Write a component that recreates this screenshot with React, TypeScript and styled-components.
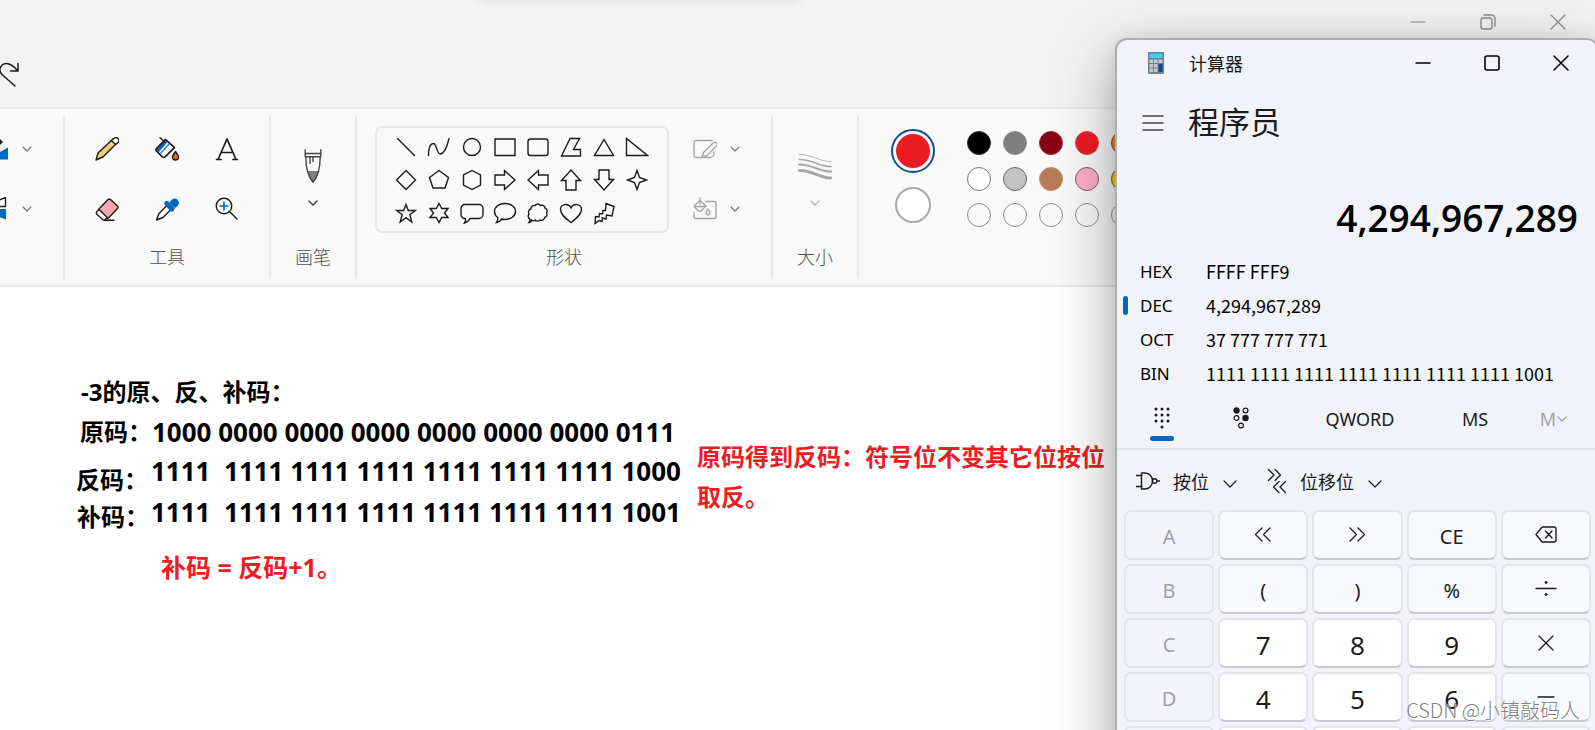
import React from "react";
import styled, { createGlobalStyle } from "styled-components";

const GlobalStyle = createGlobalStyle`
  *, *::before, *::after { box-sizing: border-box; }
  body { margin: 0; font-family: "Noto Sans CJK SC", "Noto Sans", sans-serif; color: #1b1b1b; }
  button { font: inherit; color: inherit; background: none; border: 0; padding: 0; margin: 0; }
  svg { display: block; flex: none; }
  h1, h2, p { margin: 0; font-weight: 400; }
`;

const Desktop = styled.div`
  position: relative;
  height: 100vh;
  overflow: hidden;
`;

/* ---------- Paint window ---------- */

const PaintWindow = styled.main`
  display: flex;
  flex-direction: column;
  height: 100%;
  background: #fff;
`;

const PaintHeader = styled.header`
  flex: none;
  height: 107px;
  background: #f3f3f3;
`;

/* Shade cast by the snap bar that is docked above the screen edge. */
const TopShade = styled.div`
  position: absolute;
  top: -10px;
  left: 30%;
  width: 320px;
  height: 8px;
  box-shadow: 0 2px 12px rgba(0, 0, 0, 0.12);
`;

const PaintCaption = styled.div`
  display: flex;
  justify-content: flex-end;
  height: 43px;
  padding-right: 2px;
  color: #8c8c8c;
`;

const PaintCaptionButton = styled.button`
  display: grid;
  place-items: center;
  width: 70px;
`;

const QuickBar = styled.div`
  padding-top: 19px;
`;

const Ribbon = styled.div`
  display: flex;
  flex: none;
  padding: 6px 0;
  background: #f9f9f9;
  border: solid #e9e9e9;
  border-width: 2px 0;
`;

const Group = styled.section<{ $width?: number }>`
  flex: none;
  width: ${(p) => (p.$width ? `${p.$width}px` : "auto")};
  height: 164px;
  border-right: ${(p) => (p.$width ? "2px solid #e9e9e9" : "0")};
`;

const GroupBody = styled.div<{ $gap?: number; $start?: number }>`
  display: flex;
  align-items: center;
  justify-content: ${(p) => (p.$start === undefined ? "center" : "flex-start")};
  gap: ${(p) => p.$gap ?? 0}px;
  height: 124px;
  padding: 4px 0 0 ${(p) => p.$start ?? 0}px;
`;

const GroupLabel = styled.h2`
  font-size: 18px;
  font-weight: 300;
  line-height: 34px;
  text-align: center;
  color: #505050;
`;

const IconGrid = styled.div<{ $cols: number; $cell: number }>`
  display: grid;
  grid-template-columns: repeat(${(p) => p.$cols}, ${(p) => p.$cell}px);
  grid-auto-rows: ${(p) => p.$cell}px;
`;

const IconButton = styled.button`
  display: grid;
  place-items: center;
`;

const StackButton = styled.button`
  display: flex;
  flex-direction: column;
  align-items: center;
  gap: 13px;
`;

const SplitColumn = styled.div`
  display: grid;
  grid-auto-rows: 60px;
`;

const SplitButton = styled.button`
  display: flex;
  align-items: center;
  gap: 12px;
`;

const ShapeGallery = styled.div`
  width: 294px;
  padding: 3px 12px 1px;
  border: 2px solid #e9e9e9;
  border-radius: 7px;
`;

const ActiveColors = styled.div`
  display: flex;
  flex-direction: column;
  align-items: center;
  gap: 14px;
  padding-bottom: 6px;
`;

const PrimaryColor = styled.button`
  width: 44px;
  height: 44px;
  padding: 3px;
  border: 2px solid #0f4c9c;
  border-radius: 50%;
  background-color: #ed1c24;
  background-clip: content-box;
`;

const SecondaryColor = styled.button`
  width: 36px;
  height: 36px;
  border: 2px solid #a9a9a9;
  border-radius: 50%;
  background: #fff;
`;

const Palette = styled.div`
  display: grid;
  grid-template-columns: repeat(5, 24px);
  gap: 12px;
`;

const Swatch = styled.button<{ $fill: string; $line: string }>`
  width: 24px;
  height: 24px;
  border-radius: 50%;
  border: 1px solid ${(p) => p.$line};
  background: ${(p) => p.$fill};
`;

const Canvas = styled.div`
  position: relative;
  flex: 1;
  background: #fff;
`;

const CanvasText = styled.p<{ $x: number; $y: number; $size?: number; $red?: boolean }>`
  position: absolute;
  left: ${(p) => p.$x}px;
  top: ${(p) => p.$y}px;
  font-family: "Noto Sans", "Noto Sans CJK SC", sans-serif;
  font-size: ${(p) => p.$size ?? 24}px;
  font-weight: 700;
  line-height: 40px;
  white-space: pre;
  color: ${(p) => (p.$red ? "#ed1c24" : "#000")};
`;

/* ---------- Calculator window ---------- */

const CalcWindow = styled.aside`
  position: absolute;
  top: 38px;
  right: -4px;
  width: 484px;
  border: 2px solid #adadad;
  border-radius: 12px;
  background: #f1f3f9;
  box-shadow: 0 20px 64px rgba(0, 0, 0, 0.34), 0 4px 20px rgba(0, 0, 0, 0.1);
`;

const CalcCaption = styled.header`
  display: flex;
  align-items: center;
  height: 46px;
  padding: 0 2px 0 31px;
`;

const CalcTitle = styled.h1`
  flex: 1;
  padding-left: 25px;
  font-size: 18px;
  line-height: 24px;
`;

const CalcCaptionButton = styled.button`
  display: grid;
  place-items: center;
  width: 69px;
  height: 44px;
  color: #000;
`;

const ModeRow = styled.div`
  display: flex;
  align-items: center;
  gap: 24px;
  height: 74px;
  padding-left: 25px;
`;

const ModeName = styled.h2`
  padding-bottom: 4px;
  font-size: 31px;
  line-height: 40px;
`;

const Result = styled.output`
  display: block;
  padding: 28px 19px 0 0;
  font-family: "Open Sans", "Noto Sans", sans-serif;
  font-size: 37px;
  font-weight: 600;
  line-height: 60px;
  text-align: right;
  color: #000;
`;

const BaseList = styled.div`
  display: grid;
  grid-auto-rows: 34px;
  padding: 6px 0 0 6px;
`;

const BaseRow = styled.button<{ $active?: boolean }>`
  display: grid;
  grid-template-columns: 5px 66px 1fr;
  align-items: center;
  font-size: 18px;
  text-align: left;
  color: #000;

  &::before {
    content: "";
    height: 19px;
    border-radius: 3px;
    background: ${(p) => (p.$active ? "#0067c0" : "transparent")};
  }
`;

const BaseName = styled.span`
  padding-left: 12px;
  font-family: "Noto Sans", sans-serif;
  font-size: 17px;
`;

const BaseValue = styled.span`
  padding-left: 12px;
`;

const TabRow = styled.div`
  display: grid;
  grid-template-columns: 90px 68px 170px 60px 98px;
  height: 60px;
  padding-top: 7px;
  border-bottom: 2px solid #e3e4ea;
`;

const Tab = styled.button<{ $active?: boolean; $muted?: boolean }>`
  display: flex;
  align-items: center;
  justify-content: center;
  position: relative;
  height: 44px;
  font-family: "Noto Sans", sans-serif;
  font-size: 18px;
  color: ${(p) => (p.$muted ? "#a0a1a5" : "#1b1b1b")};

  &::after {
    content: "";
    position: absolute;
    bottom: 0;
    width: 24px;
    height: 5px;
    border-radius: 3px;
    background: ${(p) => (p.$active ? "#0067c0" : "transparent")};
  }
`;

const OperatorRow = styled.div`
  display: flex;
  align-items: center;
  gap: 29px;
  height: 60px;
  padding: 2px 0 0 19px;
`;

const OperatorMenu = styled.button`
  display: flex;
  align-items: center;
  gap: 13px;
  font-size: 18px;
`;

const Keypad = styled.div`
  display: grid;
  grid-template-columns: repeat(5, 1fr);
  grid-auto-rows: 50px;
  gap: 4px;
  padding: 0 6px 6px 7px;
`;

type KeyKind = "digit" | "operator" | "disabled";

const keyColors: Record<KeyKind, string> = {
  digit: "#ffffff",
  operator: "#f8f9fd",
  disabled: "#f3f4f9",
};

const Key = styled.button<{ $kind: KeyKind; $text: boolean }>`
  display: grid;
  place-items: center;
  padding-top: ${(p) => (p.$text ? 4 : 0)}px;
  border: 2px solid #e3e4e9;
  border-bottom-color: ${(p) => (p.$kind === "disabled" ? "#e3e4e9" : "#c9cace")};
  border-radius: 7px;
  background: ${(p) => keyColors[p.$kind]};
  background-clip: padding-box;
  font-family: "Noto Sans", sans-serif;
  font-size: ${(p) => (p.$kind === "digit" ? 26 : 20)}px;
  line-height: 32px;
  color: ${(p) => (p.$kind === "disabled" ? "#a0a1a5" : "#1b1b1b")};
`;

const Watermark = styled.span`
  position: absolute;
  right: 15px;
  bottom: 5px;
  font-size: 20px;
  font-weight: 300;
  line-height: 30px;
  color: rgba(110, 110, 110, 0.9);
  text-shadow: 1px 1px 0 rgba(255, 255, 255, 0.8);
  white-space: nowrap;
`;

/* ---------- Drawings ---------- */

type IconProps = { w?: number; h?: number; sw?: number; color?: string; children: React.ReactNode };

const Icon = ({ w = 24, h = 24, sw = 1.4, color = "currentColor", children }: IconProps) => (
  <svg width={w} height={h} viewBox={`0 0 ${w} ${h}`} fill="none" stroke={color} strokeWidth={sw} strokeLinejoin="round" strokeLinecap="round" aria-hidden="true">
    {children}
  </svg>
);

const Chevron = ({ color = "#777" }: { color?: string }) => (
  <Icon w={12} h={14} sw={1.2} color={color}>
    <path d="M2 5l4 4 4-4" />
  </Icon>
);

const WideChevron = () => (
  <Icon w={16} h={16} sw={1.2}>
    <path d="M2 8l6 6 6-6" />
  </Icon>
);

const tools: [string, React.ReactNode][] = [
  ["铅笔", <g key="p"><path d="M18 2a3 3 0 014 4L8 20l-7 3 2-7z" fill="#efcb7d" /><path d="M16.5 3.5l3-2.5a3 3 0 014 4l-3 2.500z" fill="#fff" /></g>],
  ["填充", <g key="f"><path d="M10.500 2.500l9 8-9.500 9.500a2 2 0 01-2.500 0l-6-6a2 2 0 010-2.500z" fill="#fff" /><path d="M10 3l2.500 2-8.500 10-2.500-2v-2z" fill="#0067c0" stroke="none" /><path d="M14.500 6.500l-9 10" stroke="#2a7fd4" strokeWidth="1.5" strokeLinecap="butt" /><path d="M5 .7l4.500 4" /><path d="M10.500 2.500l9 8-9.500 9.500a2 2 0 01-2.500 0l-6-6a2 2 0 010-2.500z" /><path d="M20.500 14.500c2 2.700 3 4 3 5.500a3 3 0 01-6 0c0-1.500 1-2.800 3-5.500z" fill="#f7630c" /></g>],
  ["文本", <g key="t"><path d="M3 22.500L12 2l9 20.500M6 15.500h12M.8 22.500h6M17.200 22.500h6" strokeWidth="1.7" strokeLinecap="butt" /></g>],
  ["橡皮擦", <g key="e"><path d="M13 2.500a1.800 1.800 0 012.500 0l7 6.500a1.800 1.800 0 010 2.500L12.500 22 3.500 12.500z" fill="#f7a9ad" /><path d="M4 12.500l-2 2a2 2 0 000 2.800l5.500 5.200a2 2 0 002.600 0l2.200-2z" fill="#fff" /><path d="M9 23.300h10" /></g>],
  ["颜色选取器", <g key="c"><path d="M12.500 8L4 16.500 1.500 23l6.500-2.500L16.500 12z" fill="#fff" /><path d="M10 4.500a2.500 2.500 0 013.500 0l6.500 6.500-1.500 3a2 2 0 01-3 0l-5.500-6a2.500 2.500 0 010-3.500z" fill="#0067c0" stroke="none" /><path d="M16 3.500a4.300 4.300 0 116.500 5.500l-2.500 2-5.500-5.500z" fill="#0067c0" stroke="none" /></g>],
  ["放大镜", <g key="m"><circle cx="9" cy="9" r="7.800" /><path d="M15 15l7 7" /><path d="M5 9h8M9 5v8" stroke="#0067c0" strokeWidth="1.600" /></g>],
];

const shapes: [string, string][] = [
  ["直线", "M3.500 3.500l17 17"],
  ["曲线", "M1.500 20.500c0-7 1.500-12 5-12s3 11 7 10.500c4-.5 6.500-7 8.500-15.500"],
  ["椭圆形", "M12 3.500a8.500 8.500 0 100 17 8.500 8.500 0 000-17z"],
  ["矩形", "M2 4h20v16.500H2z"],
  ["圆角矩形", "M4.500 4h15a2.500 2.500 0 012.500 2.500v11.500a2.500 2.500 0 01-2.500 2.500h-15a2.500 2.500 0 01-2.500-2.500V6.500A2.500 2.500 0 014.500 4z"],
  ["多边形", "M11 3.500h9.500l-6 11h7v6.500H2.500z"],
  ["三角形", "M12 4.500l9.500 16h-19z"],
  ["直角三角形", "M1.500 3.500v17h21z"],
  ["菱形", "M12 2.500l9.500 9.500-9.500 9.500L2.500 12z"],
  ["五边形", "M12 2.500l9.500 7-3.500 10.500H6L2.500 9.500z"],
  ["六边形", "M12 2.500l8.500 4.500v10L12 21.500 3.500 17V7z"],
  ["右箭头", "M2 7h9.500V2.500L22 12 11.500 21.500V17H2z"],
  ["左箭头", "M22 7h-9.500V2.500L2 12l10.500 9.500V17H22z"],
  ["上箭头", "M7 22V12.500H2.500L12 2l9.500 10.500H17V22z"],
  ["下箭头", "M7 2v9.500H2.500L12 22l9.500-10.500H17V2z"],
  ["四角星形", "M12 2.500l2.500 7 7 2.500-7 2.500-2.500 7-2.500-7-7-2.500 7-2.500z"],
  ["五角星形", "M12 3.500l2.300 6h7l-5.500 4.200 2 7.300-5.800-4.300L6.200 21l2-7.300L2.700 9.500h7z"],
  ["六角星形", "M12 2.500l2.700 5h6.300l-3.500 4.500 3.500 4.500h-6.300l-2.700 5-2.700-5H3l3.500-4.500L3 7.500h6.300z"],
  ["圆角矩形标注", "M5 3.500h14a4 4 0 014 4v6a4 4 0 01-4 4h-9c-1 2-3 4-5.500 4.500 1-1.500 1.500-3 1-4.500a4 4 0 01-4.500-4v-6a4 4 0 014-4z"],
  ["椭圆形标注", "M12 2.500c6 0 10.500 3.500 10.500 8s-5 8-10.500 8c-1.500 0-2.500-.2-3.500-.5-.8 2-2.500 3-5 3.500 1.200-1.500 1.500-3 1.200-5C2.500 15 1.500 13 1.500 10.500c0-4.500 4.500-8 10.500-8z"],
  ["云形标注", "M9 4.500c1.500-2 4-2 5.500 0 2-1 4.500.5 4.500 2.500 2 .7 3 3 1.500 5 1.200 2 .2 4-1.800 4.500-.2 2-2.700 3.500-4.700 2.500-1.500 1.500-4 1.500-5 0-1 .8-2.500.8-3.500 0 0 1.500-1 2.300-2.500 2.500.8-1 1-2 .8-3.500-2-1-2-3.500-.8-5-1.200-2-.2-4.500 1.800-5 .2-2.500 2.200-4 4.200-3.500z"],
  ["心形", "M12 21.500C7 17.500 1.500 13.500 1.500 8.500 1.500 3 9.500 1.500 12 7c2.500-5.500 10.500-4 10.500 1.500 0 5-5.500 9-10.500 13z"],
  ["闪电", "M14 2.500l8 3-2 9.500-5.500-1-.5 4-3.500-1-.5 3.500-3-1L3 22.500l.5-7 3.500.5.500-3.500 3 .5.500-3.500 2.500 0z"],
];

const palette: [string, string, string][] = [
  ["黑色", "#000000", "#333"],
  ["灰色", "#7f7f7f", "#8f8f8f"],
  ["深红色", "#880015", "#97303f"],
  ["红色", "#ed1c24", "#e5444a"],
  ["橙色", "#ff7f27", "#555"],
  ["白色", "#ffffff", "#777"],
  ["浅灰色", "#c3c3c3", "#666"],
  ["褐色", "#b97a57", "#c58c6c"],
  ["玫瑰色", "#ffaec9", "#666"],
  ["金色", "#ffc90e", "#555"],
  ["自定义 1", "transparent", "#8c8c8c"],
  ["自定义 2", "transparent", "#8c8c8c"],
  ["自定义 3", "transparent", "#8c8c8c"],
  ["自定义 4", "transparent", "#8c8c8c"],
  ["自定义 5", "transparent", "#8c8c8c"],
];

const bases: [string, string][] = [
  ["HEX", "FFFF FFF9"],
  ["DEC", "4,294,967,289"],
  ["OCT", "37 777 777 771"],
  ["BIN", "1111 1111 1111 1111 1111 1111 1111 1001"],
];

const keys: [KeyKind, React.ReactNode, string?][] = [
  ["disabled", "A"],
  ["operator", <Icon key="i" sw={1.3}><path d="M11 5l-6.500 6.500 6.500 6.500M19 5l-6.500 6.500 6.500 6.500" /></Icon>, "左移"],
  ["operator", <Icon key="i" sw={1.3}><path d="M5 5l6.500 6.500L5 18M13 5l6.500 6.500-6.500 6.500" /></Icon>, "右移"],
  ["operator", "CE"],
  ["operator", <Icon key="i" sw={1.4}><path d="M9 4h11a2 2 0 012 2v11a2 2 0 01-2 2H9a2 2 0 01-1.500-.7L2 11.500l5.500-6.800A2 2 0 019 4zM11.500 8l6.500 7M18 8l-6.500 7" /></Icon>, "退格"],
  ["disabled", "B"],
  ["operator", "("],
  ["operator", ")"],
  ["operator", "%"],
  ["operator", <Icon key="i" sw={1.3}><path d="M2 11.500h20" /><circle cx="12" cy="5.500" r="1" fill="#1b1b1b" strokeWidth="1" /><circle cx="12" cy="17.500" r="1" fill="#1b1b1b" strokeWidth="1" /></Icon>, "除以"],
  ["disabled", "C"],
  ["digit", "7"],
  ["digit", "8"],
  ["digit", "9"],
  ["operator", <Icon key="i" sw={1.3}><path d="M5 5l14 14M19 5L5 19" /></Icon>, "乘以"],
  ["disabled", "D"],
  ["digit", "4"],
  ["digit", "5"],
  ["digit", "6"],
  ["operator", <Icon key="i" sw={1.4}><path d="M4 12h16" /></Icon>, "减去"],
  ["disabled", null, "E"],
  ["digit", null, "1"],
  ["digit", null, "2"],
  ["digit", null, "3"],
  ["operator", null, "加"],
];

const CalcLogo = () => (
  <svg width="16" height="22" viewBox="0 0 16 22" aria-hidden="true">
    <rect width="16" height="22" rx="1" fill="#71808e" />
    <rect x="1.500" y="1.500" width="13" height="4.500" fill="#3fd0f5" />
    <g fill="#c3ccd6">
      <rect x="1.500" y="7.500" width="3.500" height="3.500" /><rect x="6" y="7.500" width="3.500" height="3.500" /><rect x="10.700" y="7.500" width="3.800" height="3.500" />
      <rect x="1.500" y="12" width="3.500" height="3.500" /><rect x="6" y="12" width="3.500" height="3.500" />
      <rect x="1.500" y="16.500" width="3.500" height="3.500" /><rect x="6" y="16.500" width="3.500" height="3.500" />
    </g>
    <rect x="10.700" y="12" width="3.800" height="8" fill="#134a8e" />
  </svg>
);

export default function App() {
  return (
    <Desktop>
      <GlobalStyle />
      <PaintWindow>
        <PaintHeader>
          <TopShade />
          <PaintCaption>
            <PaintCaptionButton aria-label="最小化画图"><Icon w={16} h={16} sw={1.2}><path d="M1 8h14" /></Icon></PaintCaptionButton>
            <PaintCaptionButton aria-label="还原画图"><Icon w={16} h={16} sw={1.4}><rect x="1" y="4" width="11" height="11" rx="2" /><path d="M4 1h7.500a3.500 3.500 0 013.500 3.500V12" /></Icon></PaintCaptionButton>
            <PaintCaptionButton aria-label="关闭画图"><Icon w={16} h={16} sw={1.3}><path d="M1 1l14 14M15 1L1 15" /></Icon></PaintCaptionButton>
          </PaintCaption>
          <QuickBar>
            <IconButton aria-label="重做"><Icon w={20} h={26} sw={1.5}><path d="M15 24L2 12.500C-3 7 2 1.500 6.500 1.500c4.500 0 7.500 3 11 7M18 1.500v7.500h-7.500" strokeLinejoin="miter" /></Icon></IconButton>
          </QuickBar>
        </PaintHeader>

        <Ribbon>
          <Group $width={65}>
            <GroupBody $start={0}>
              <SplitColumn>
                <SplitButton aria-label="旋转">
                  <Icon w={9} h={24}><path d="M0 15l8-4.500v12H0z" fill="#0067c0" stroke="none" /><path d="M0 2l3 3-3 3" fill="#1b1b1b" stroke="none" /></Icon>
                  <Chevron />
                </SplitButton>
                <SplitButton aria-label="翻转">
                  <Icon w={9} h={24}><path d="M-2 3.500l7.500-3v9h-7.500z" fill="#fff" /><path d="M-2 12h8v10.500l-8-3z" fill="#0067c0" stroke="none" /></Icon>
                  <Chevron />
                </SplitButton>
              </SplitColumn>
            </GroupBody>
          </Group>

          <Group $width={206}>
            <GroupBody>
              <IconGrid $cols={3} $cell={60}>
                {tools.map(([name, art]) => (
                  <IconButton key={name} aria-label={name}><Icon>{art}</Icon></IconButton>
                ))}
              </IconGrid>
            </GroupBody>
            <GroupLabel>工具</GroupLabel>
          </Group>

          <Group $width={86}>
            <GroupBody>
              <StackButton aria-label="画笔">
                <Icon w={18} h={34} sw={1.4} color="#444">
                  <path d="M3 22h12c-1.500 5-3.500 8.500-6 11.500C6.500 30.500 4.500 27 3 22z" fill="#808080" stroke="none" />
                  <path d="M1.200.7v7h15.600v-7M1.200 4.500h15.600M1.800 7.700c0 11 1.700 19 7.200 25.500 5.500-6.500 7.200-14.500 7.200-25.500M6 8v6.500M9 8v4.500" />
                </Icon>
                <Chevron color="#333" />
              </StackButton>
            </GroupBody>
            <GroupLabel>画笔</GroupLabel>
          </Group>

          <Group $width={416}>
            <GroupBody $gap={24} $start={18}>
              <ShapeGallery>
                <IconGrid $cols={8} $cell={33}>
                  {shapes.map(([name, d]) => (
                    <IconButton key={name} aria-label={name}><Icon><path d={d} strokeLinejoin="miter" /></Icon></IconButton>
                  ))}
                </IconGrid>
              </ShapeGallery>
              <SplitColumn>
                <SplitButton aria-label="形状轮廓">
                  <Icon color="#a6a6a6"><path d="M19 3.500H3A1.800 1.800 0 001 5.500v13A1.800 1.800 0 003 20.500h6M9 20.500l1.500-5L20 6a2.300 2.300 0 013.300 3.300L14 18.500zM9 20.500h8a4 4 0 004-4V15" /></Icon>
                  <Chevron />
                </SplitButton>
                <SplitButton aria-label="形状填充">
                  <Icon color="#a6a6a6"><path d="M13 4.500h8a2 2 0 012 2v13a2 2 0 01-2 2H3a2 2 0 01-2-2v-4M7 1v6M1.500 8.500L7 3.500l6 5.500-5 5H5.500L1.500 10zM1.500 9.500H12M15 12c1.500 1.800 2 2.800 2 3.800a2 2 0 01-4 0c0-1 .6-2 2-3.800z" /></Icon>
                  <Chevron />
                </SplitButton>
              </SplitColumn>
            </GroupBody>
            <GroupLabel>形状</GroupLabel>
          </Group>

          <Group $width={86}>
            <GroupBody>
              <StackButton aria-label="大小">
                <Icon w={34} h={34} color="#a6a6a6">
                  <path d="M1 5.500C14 5 22 13 33 12.500" strokeWidth=".8" />
                  <path d="M1 10.500C14 10 22 18 33 17.500" strokeWidth="1.600" />
                  <path d="M1 15.500C14 15 22 23 33 22.500" strokeWidth="2.200" />
                  <path d="M1.500 21.500C14 21 22 29.500 32.500 29" strokeWidth="3" />
                </Icon>
                <Chevron color="#b0b0b0" />
              </StackButton>
            </GroupBody>
            <GroupLabel>大小</GroupLabel>
          </Group>

          <Group>
            <GroupBody $gap={32} $start={32}>
              <ActiveColors>
                <PrimaryColor aria-label="颜色 1" />
                <SecondaryColor aria-label="颜色 2" />
              </ActiveColors>
              <Palette>
                {palette.map(([name, fill, line]) => (
                  <Swatch key={name} $fill={fill} $line={line} aria-label={name} />
                ))}
              </Palette>
            </GroupBody>
          </Group>
        </Ribbon>

        <Canvas>
          <CanvasText $x={81} $y={85}>-3的原、反、补码：</CanvasText>
          <CanvasText $x={80} $y={125}>原码：</CanvasText>
          <CanvasText $x={152} $y={125} $size={26}>1000 0000 0000 0000 0000 0000 0000 0111</CanvasText>
          <CanvasText $x={76} $y={173}>反码：</CanvasText>
          <CanvasText $x={151} $y={164} $size={26}>{"1111  1111 1111 1111 1111 1111 1111 1000"}</CanvasText>
          <CanvasText $x={77} $y={210}>补码：</CanvasText>
          <CanvasText $x={151} $y={205} $size={26}>{"1111  1111 1111 1111 1111 1111 1111 1001"}</CanvasText>
          <CanvasText $x={697} $y={150} $red>{"原码得到反码：符号位不变其它位按位\n取反。"}</CanvasText>
          <CanvasText $x={161} $y={260} $size={25} $red>补码 = 反码+1。</CanvasText>
        </Canvas>
      </PaintWindow>

      <CalcWindow>
        <CalcCaption>
          <CalcLogo />
          <CalcTitle>计算器</CalcTitle>
          <CalcCaptionButton aria-label="最小化"><Icon w={16} h={16} sw={1.6}><path d="M1 8h14" /></Icon></CalcCaptionButton>
          <CalcCaptionButton aria-label="最大化"><Icon w={16} h={16} sw={1.6}><rect x="1" y="1" width="14" height="14" rx="2" /></Icon></CalcCaptionButton>
          <CalcCaptionButton aria-label="关闭"><Icon w={16} h={16} sw={1.5}><path d="M1 1l14 14M15 1L1 15" /></Icon></CalcCaptionButton>
        </CalcCaption>
        <ModeRow>
          <IconButton aria-label="打开导航"><Icon w={22} h={22} sw={1.5} color="#444"><path d="M1 4h20M1 11h20M1 18h20" /></Icon></IconButton>
          <ModeName>程序员</ModeName>
        </ModeRow>
        <Result>4,294,967,289</Result>
        <BaseList>
          {bases.map(([name, value]) => (
            <BaseRow key={name} $active={name === "DEC"}>
              <BaseName>{name}</BaseName>
              <BaseValue>{value}</BaseValue>
            </BaseRow>
          ))}
        </BaseList>
        <TabRow>
          <Tab $active aria-label="全键盘">
            <Icon w={18} h={24}>
              <g fill="#1b1b1b" stroke="none">
                {[3, 9, 15].map((y) => [3, 9, 15].map((x) => <circle key={`${x}-${y}`} cx={x} cy={y - 1} r="1.500" />))}
                <circle cx="9" cy="20" r="1.500" />
              </g>
            </Icon>
          </Tab>
          <Tab aria-label="位切换键盘">
            <Icon w={18} h={24} sw={1.2}>
              <circle cx="4.500" cy="3.500" r="2.600" fill="#1b1b1b" /><circle cx="13.500" cy="3.500" r="2.400" />
              <circle cx="4.500" cy="11" r="2.400" /><circle cx="13.500" cy="11" r="2.600" fill="#1b1b1b" />
              <circle cx="9" cy="18.500" r="2.400" />
            </Icon>
          </Tab>
          <Tab>QWORD</Tab>
          <Tab>MS</Tab>
          <Tab $muted>M<Chevron color="#a0a1a5" /></Tab>
        </TabRow>
        <OperatorRow>
          <OperatorMenu>
            <Icon sw={1.4}><path d="M0 6.500h6M0 17.500h6M5.500 4h3c5 0 8 3.500 8 8s-3 8-8 8h-3zM21 12h3" /><circle cx="18.700" cy="12" r="2.200" /></Icon>
            按位
            <WideChevron />
          </OperatorMenu>
          <OperatorMenu>
            <Icon w={20} h={26} sw={1.3}><path d="M1.500 1.500l5.500 5.500-5.500 5.500M8 1.500l5.500 5.500L8 12.500M12 13.500L6.500 19l5.500 5.500M18.500 13.500L13 19l5.500 5.500" /></Icon>
            位移位
            <WideChevron />
          </OperatorMenu>
        </OperatorRow>
        <Keypad>
          {keys.map(([kind, face, label], i) => (
            <Key key={i} $kind={kind} $text={typeof face === "string"} aria-label={label} disabled={kind === "disabled"}>{face}</Key>
          ))}
        </Keypad>
      </CalcWindow>

      <Watermark>CSDN @小镇敲码人</Watermark>
    </Desktop>
  );
}
